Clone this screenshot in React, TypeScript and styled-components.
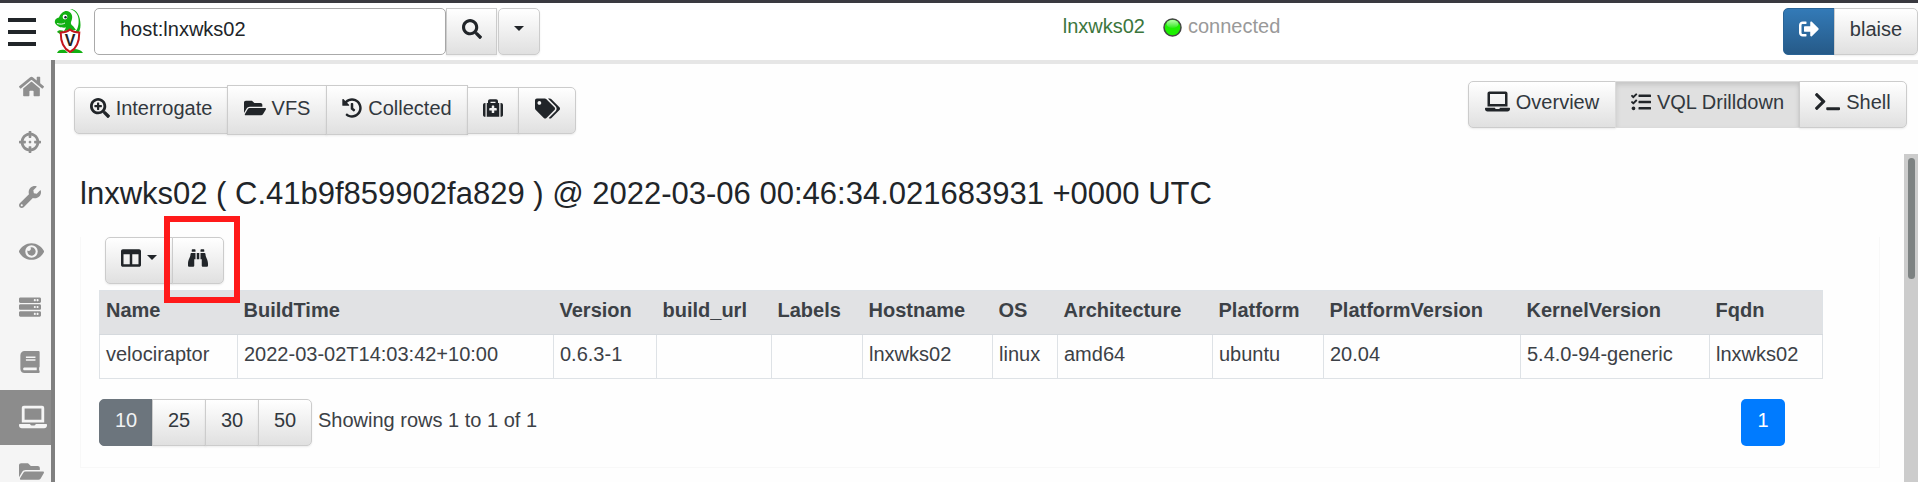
import React from 'react';
import styled, { createGlobalStyle, css } from 'styled-components';
import {
  FaHome, FaCrosshairs, FaWrench, FaEye, FaServer, FaBook, FaLaptop, FaFolderOpen,
  FaSearch, FaSearchPlus, FaHistory, FaMedkit, FaTags, FaTasks, FaTerminal,
  FaColumns, FaBinoculars, FaSignOutAlt,
} from 'react-icons/fa';

const GlobalStyle = createGlobalStyle`
  *, *::before, *::after { box-sizing: border-box; }
  html, body, #root { height: 100%; }
  body {
    margin: 0;
    overflow: hidden;
    background: #fefefe;
    color: #212529;
    font: 20px/30px "Liberation Sans", Arial, sans-serif;
  }
  button, input { font: inherit; color: inherit; margin: 0; }
`;

const Page = styled.div`
  display: flex;
  flex-direction: column;
  height: 100%;
  border-top: 3px solid #3a3a40;
`;

const Header = styled.header`
  display: flex;
  align-items: flex-start;
  flex: none;
  height: 57px;
  padding-top: 5px;
  background: #fff;
`;

const MenuButton = styled.button`
  display: flex;
  flex-direction: column;
  gap: 8px;
  margin: 10px 18px 0 8px;
  padding: 0;
  border: 0;
  background: none;
  cursor: pointer;
`;

const MenuBar = styled.span`
  width: 28px;
  height: 4px;
  background: #212529;
`;

const LogoImage = styled.svg`
  flex: none;
  width: 30px;
  height: 46px;
  margin-right: 10px;
`;

const SearchBox = styled.input`
  width: 352px;
  height: 47px;
  padding: 2px 25px 6px;
  border: 1px solid #aaa;
  border-radius: 5px;
  background: #fff;
  outline: 0;
`;

type ButtonProps = { $tone?: 'light' | 'pressed' | 'primary' | 'dark'; $tall?: boolean; $width?: number };

const tones = {
  light: css`
    border-color: #ccc;
    background: linear-gradient(#fff, #e0e0e0);
    box-shadow: 0 1px 2px rgba(0, 0, 0, 0.08);
    svg { color: #212529; }
  `,
  pressed: css`
    border-color: #dbdbdb;
    background: #e0e0e0;
    box-shadow: inset 0 3px 5px rgba(0, 0, 0, 0.12);
    svg { color: #212529; }
  `,
  primary: css`
    border-color: #2a6496;
    background: linear-gradient(#337ab7, #265a88);
    color: #fff;
  `,
  dark: css`
    border-color: #6c757d;
    background: #6c757d;
    color: #f1f3f5;
  `,
};

const Button = styled.button<ButtonProps>`
  display: flex;
  align-items: center;
  justify-content: center;
  gap: 6px;
  flex: none;
  min-width: ${p => p.$width ?? 51}px;
  height: ${p => (p.$tall ? 50 : 47)}px;
  padding: 0 14px 6px;
  border: 1px solid;
  color: #32383e;
  white-space: nowrap;
  cursor: pointer;
  ${p => tones[p.$tone ?? 'light']}
  svg { flex: none; }
`;

const ButtonGroup = styled.div`
  display: flex;
  align-items: center;
  & > * + * { margin-left: -1px; }
  & > :first-child { border-radius: 5px 0 0 5px; }
  & > :last-child { border-radius: 0 5px 5px 0; }
`;

const SearchGroup = styled.form`
  display: flex;
`;

const DropButton = styled(Button)`
  border-radius: 5px;
  margin-left: 1px;
`;

const Caret = styled.span`
  width: 0;
  height: 0;
  border: 5px solid transparent;
  border-top-color: #212529;
  border-bottom: 0;
`;

const Status = styled.div`
  display: flex;
  align-items: center;
  margin: 3px auto 0;
  padding-left: 20px;
  color: #999;
  line-height: 30px;
`;

const HostLink = styled.a`
  margin-right: 18px;
  color: #3c763d;
  text-decoration: none;
`;

const Led = styled.svg`
  width: 19px;
  height: 19px;
  margin: 3px 6px 0 0;
`;

const Body = styled.div`
  display: flex;
  flex: 1;
  min-height: 0;
`;

const Sidebar = styled.nav`
  flex: none;
  width: 55px;
  overflow: hidden;
  border-right: 4px solid #808080;
  background: #f5f5f5;
`;

const SideLink = styled.a<{ $active?: boolean }>`
  display: flex;
  align-items: center;
  height: 55px;
  padding: 0 0 2px 19px;
  background: ${p => (p.$active ? '#8c8c8c' : 'transparent')};
  color: ${p => (p.$active ? '#f5f5f5' : '#8f8f8f')};
  svg { flex: none; }
`;

const Main = styled.main`
  display: flex;
  flex-direction: column;
  flex: 1;
  min-width: 0;
  border-top: 4px solid #e6e6e6;
`;

const Toolbar = styled.div`
  display: flex;
  justify-content: space-between;
  align-items: flex-start;
  flex: none;
  height: 90px;
  padding: 17px 11px 0 19px;
`;

const ActionGroup = styled(ButtonGroup)`
  margin-top: 4px;
  & > button { padding-bottom: 4px; }
`;

const ScrollArea = styled.div`
  display: flex;
  flex: 1;
  min-height: 0;
`;

const Content = styled.section`
  flex: 1;
  min-width: 0;
  overflow: hidden;
  padding: 22px 24px 0 25px;
`;

const Track = styled.div`
  flex: none;
  width: 14px;
  padding: 4px 3px 0 4px;
  background: #ccc;
`;

const Thumb = styled.div`
  height: 121px;
  border-radius: 4px;
  background: #7d8282;
`;

const Title = styled.h1`
  margin: 0 0 25px;
  font-size: 31px;
  font-weight: 400;
  line-height: 36px;
`;

const Card = styled.div`
  padding: 0 56px 21px 18px;
  border: 1px solid #f8f8f8;
  border-top: 0;
`;

const TableTools = styled(ButtonGroup)`
  padding: 0 0 6px 6px;
`;

const Highlighted = styled.div`
  position: relative;
  & > button { border-radius: 0 5px 5px 0; }
`;

const HighlightFrame = styled.div`
  position: absolute;
  inset: -21px -16px -19px -8px;
  border: 6px solid #ff1a1a;
  pointer-events: none;
`;

const Table = styled.table`
  width: 100%;
  table-layout: fixed;
  border-collapse: collapse;
  border: 1px solid #dee2e6;
  color: #3c4146;
`;

const HeadCell = styled.th`
  height: 44px;
  padding: 0 0 6px 6px;
  border-bottom: 1px solid #d5d9dd;
  background: #e1e2e4;
  text-align: left;
  white-space: nowrap;
`;

const Cell = styled.td`
  height: 44px;
  padding: 0 0 6px 6px;
  border: 1px solid #dee2e6;
  white-space: nowrap;
`;

const Footer = styled.div`
  display: flex;
  align-items: flex-start;
  margin-top: 20px;
  padding-right: 38px;
  color: #3c4146;
`;

const Summary = styled.p`
  flex: 1;
  margin: 6px 0 0 6px;
`;

const PageButton = styled.button`
  width: 44px;
  height: 47px;
  padding: 0 0 6px;
  border: 0;
  border-radius: 5px;
  background: #007bff;
  color: #fff;
`;

const Logo = () => (
  <LogoImage viewBox="0 0 30 46" role="img" aria-label="Velociraptor">
    <path d="M16 1c7 0 10.500 7 10.500 16 0 4-1 7-3.500 9l-2-2c3-3 4-8 3.500-13C24 6 21 2.500 16 1z" fill="#12b012" />
    <path d="M1 15c-.6-3 1-5 4-5.500C7 4 12 1.500 15.500 4c3 2 3.500 6 1.500 10-.6 1.500.5 3 2 4l3 4-12 1 2-3.500c-3 .5-8.500 0-11-4.500z" fill="#12b012" />
    <path d="M3 24c1-2 4-2 7-1l-4 3zM3 45c1-3 4-4 8-3l3 3zM16 45l4-4c4 0 7 1 9 4z" fill="#12b012" />
    <circle cx="11" cy="9" r="2.400" fill="#fff" />
    <circle cx="11.500" cy="9.300" r="1.200" fill="#123" />
    <path d="M3 15.500c3 1 6 .8 8-.5" fill="none" stroke="#fff" strokeWidth=".9" />
    <path d="M16 21.500c3 2.500 6 3 9.300 3C25.300 34 23 40.500 16 44 9 40.500 6.700 34 6.700 24.500c3.300 0 6.300-.5 9.300-3z" fill="#fff" stroke="#c4161c" strokeWidth="2" />
    <text x="16" y="38" textAnchor="middle" fontFamily="Liberation Sans, sans-serif" fontWeight="700" fontSize="16" fill="#222">V</text>
  </LogoImage>
);

const sideItems = [
  { label: 'Home', Icon: FaHome, size: 25 },
  { label: 'Hunts', Icon: FaCrosshairs, size: 22 },
  { label: 'Artifacts', Icon: FaWrench, size: 22 },
  { label: 'Events', Icon: FaEye, size: 25 },
  { label: 'Server', Icon: FaServer, size: 22 },
  { label: 'Notebooks', Icon: FaBook, size: 22 },
  { label: 'Host', Icon: FaLaptop, size: 28, active: true },
  { label: 'Files', Icon: FaFolderOpen, size: 25 },
];

// Each column: heading, value, relative width
const columns: [string, string, number][] = [
  ['Name', 'velociraptor', 138],
  ['BuildTime', '2022-03-02T14:03:42+10:00', 316],
  ['Version', '0.6.3-1', 103],
  ['build_url', '', 115],
  ['Labels', '', 91],
  ['Hostname', 'lnxwks02', 130],
  ['OS', 'linux', 65],
  ['Architecture', 'amd64', 155],
  ['Platform', 'ubuntu', 111],
  ['PlatformVersion', '20.04', 197],
  ['KernelVersion', '5.4.0-94-generic', 189],
  ['Fqdn', 'lnxwks02', 113],
];
const totalWidth = columns.reduce((sum, c) => sum + c[2], 0);

export default function App() {
  return (
    <>
      <GlobalStyle />
      <Page>
        <Header>
          <MenuButton aria-label="Menu"><MenuBar /><MenuBar /><MenuBar /></MenuButton>
          <Logo />
          <SearchGroup onSubmit={e => e.preventDefault()}>
            <SearchBox aria-label="Search clients" defaultValue="host:lnxwks02" />
            <Button type="submit" aria-label="Search"><FaSearch size={20} /></Button>
            <DropButton type="button" $width={42} aria-label="Search options"><Caret /></DropButton>
          </SearchGroup>
          <Status>
            <HostLink href="#host">lnxwks02</HostLink>
            <Led viewBox="0 0 19 19" aria-hidden="true">
              <defs>
                <linearGradient id="shine" x1="0" y1="0" x2="0" y2="1">
                  <stop offset="0" stopColor="#b8ffae" />
                  <stop offset="1" stopColor="#2fe81c" />
                </linearGradient>
              </defs>
              <circle cx="9.500" cy="9.500" r="8.500" fill="#1cf000" stroke="#444" strokeWidth="1.500" />
              <ellipse cx="9.500" cy="6" rx="6" ry="4" fill="url(#shine)" />
            </Led>
            <span>connected</span>
          </Status>
          <ButtonGroup>
            <Button $tone="primary" $width={52} aria-label="Log out"><FaSignOutAlt size={20} /></Button>
            <Button $width={84}>blaise</Button>
          </ButtonGroup>
        </Header>
        <Body>
          <Sidebar>
            {sideItems.map(({ label, Icon, size, active }) => (
              <SideLink key={label} href={`#${label.toLowerCase()}`} aria-label={label} $active={active}>
                <Icon size={size} />
              </SideLink>
            ))}
          </Sidebar>
          <Main>
            <Toolbar>
              <ActionGroup>
                <Button $width={154}><FaSearchPlus size={20} />Interrogate</Button>
                <Button $width={100} $tall><FaFolderOpen size={22} />VFS</Button>
                <Button $width={142} $tall><FaHistory size={20} />Collected</Button>
                <Button $width={52} aria-label="Quarantine"><FaMedkit size={20} /></Button>
                <Button $width={58} aria-label="Labels"><FaTags size={25} /></Button>
              </ActionGroup>
              <ButtonGroup>
                <Button $width={148}><FaLaptop size={25} />Overview</Button>
                <Button $width={185} $tone="pressed"><FaTasks size={20} />VQL Drilldown</Button>
                <Button $width={108}><FaTerminal size={25} />Shell</Button>
              </ButtonGroup>
            </Toolbar>
            <ScrollArea>
              <Content>
                <Title>lnxwks02 ( C.41b9f859902fa829 ) @ 2022-03-06 00:46:34.021683931 +0000 UTC</Title>
                <Card>
                  <TableTools>
                    <Button $width={68} aria-label="Columns"><FaColumns size={20} /><Caret /></Button>
                    <Highlighted>
                      <Button $width={52} aria-label="Raw view"><FaBinoculars size={20} /></Button>
                      <HighlightFrame />
                    </Highlighted>
                  </TableTools>
                  <Table>
                    <colgroup>
                      {columns.map(c => <col key={c[0]} style={{ width: `${(c[2] / totalWidth) * 100}%` }} />)}
                    </colgroup>
                    <thead>
                      <tr>{columns.map(c => <HeadCell key={c[0]}>{c[0]}</HeadCell>)}</tr>
                    </thead>
                    <tbody>
                      <tr>{columns.map(c => <Cell key={c[0]}>{c[1]}</Cell>)}</tr>
                    </tbody>
                  </Table>
                  <Footer>
                    <ButtonGroup>
                      {[10, 25, 30, 50].map(n => (
                        <Button key={n} $width={54} $tone={n === 10 ? 'dark' : 'light'}>{n}</Button>
                      ))}
                    </ButtonGroup>
                    <Summary>Showing rows 1 to 1 of 1</Summary>
                    <PageButton>1</PageButton>
                  </Footer>
                </Card>
              </Content>
              <Track><Thumb /></Track>
            </ScrollArea>
          </Main>
        </Body>
      </Page>
    </>
  );
}
